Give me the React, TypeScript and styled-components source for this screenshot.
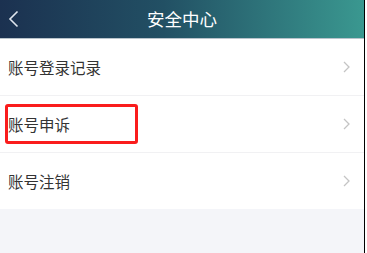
import React from "react";
import styled, { createGlobalStyle } from "styled-components";

const GlobalStyle = createGlobalStyle`
  html, body {
    margin: 0;
    padding: 0;
    background: #ffffff;
  }
  body {
    font-family: "Noto Sans CJK SC", "Noto Sans", sans-serif;
  }
`;

const Page = styled.div`
  width: 364px;
  height: 253px;
  border-right: 1px solid #000;
  background: #f4f5f9;
  display: flex;
  flex-direction: column;
`;

const Header = styled.div`
  height: 38px;
  flex-shrink: 0;
  background: linear-gradient(90deg, #1b3150 0%, #225064 45%, #3a9890 100%);
  border-bottom: 1px solid #b9c4cc;
  display: grid;
  grid-template-columns: 40px 1fr 40px;
  align-items: center;
`;

const BackButton = styled.div`
  display: flex;
  align-items: center;
  padding-left: 8px;
`;

const Title = styled.div`
  text-align: center;
  color: #ffffff;
  font-size: 17.5px;
  line-height: 1;
`;

const List = styled.div`
  background: #ffffff;
  display: flex;
  flex-direction: column;
`;

const Row = styled.div<{ $last?: boolean }>`
  position: relative;
  height: 56px;
  border-bottom: ${(p) => (p.$last ? "none" : "1px solid #f1f1f3")};
  display: flex;
  align-items: center;
  justify-content: space-between;
  padding: 0 14px 0 8px;
`;

const Label = styled.span`
  font-size: 15.5px;
  color: #333333;
`;

const Highlight = styled.div`
  position: absolute;
  left: 5px;
  top: 8px;
  width: 133px;
  height: 40px;
  box-sizing: border-box;
  border: 3px solid #fa1c1c;
  border-radius: 3px;
`;

const Chevron = () => (
  <svg width="7" height="12" viewBox="0 0 7 12">
    <path d="M1 1 L6 6 L1 11" fill="none" stroke="#c4c4c4" strokeWidth="1.3" />
  </svg>
);

const items = [
  { label: "账号登录记录" },
  { label: "账号申诉", marked: true },
  { label: "账号注销" },
];

export default function App() {
  return (
    <>
      <GlobalStyle />
      <Page>
        <Header>
          <BackButton>
            <svg width="11" height="18" viewBox="0 0 11 18">
              <path d="M9.5 1.5 L2 9 L9.5 16.5" fill="none" stroke="#dfe6ee" strokeWidth="1.6" />
            </svg>
          </BackButton>
          <Title>安全中心</Title>
          <div />
        </Header>
        <List>
          {items.map((item, i) => (
            <Row key={item.label} $last={i === items.length - 1}>
              <Label>{item.label}</Label>
              <Chevron />
              {item.marked && <Highlight />}
            </Row>
          ))}
        </List>
      </Page>
    </>
  );
}
